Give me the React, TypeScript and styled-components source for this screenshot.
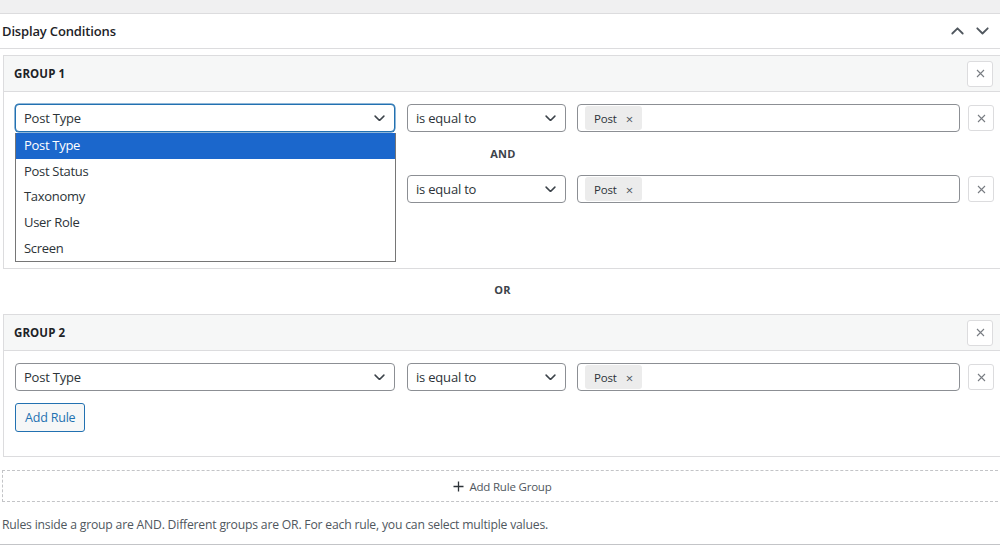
import React from 'react';
import styled, { createGlobalStyle } from 'styled-components';

const GlobalStyle = createGlobalStyle`
  html, body {
    margin: 0;
    padding: 0;
    background: #fff;
    overflow: hidden;
  }
  body {
    font-family: 'Open Sans', 'Noto Sans', sans-serif;
    color: #1d2327;
  }
  * { box-sizing: border-box; }
`;

// Page frame

const TopStrip = styled.div`
  height: 14px;
  background: #f0f0f1;
  border-bottom: 1px solid #dcdcde;
`;

const Panel = styled.div`
  width: 1003px;
  border-bottom: 1px solid #c3c4c7;
`;

const PanelHeader = styled.div`
  display: flex;
  align-items: center;
  justify-content: space-between;
  height: 35px;
  padding: 0 14px 0 2px;
  border-bottom: 1px solid #dcdcde;
`;

const PanelTitle = styled.h2`
  margin: 0;
  font-size: 13px;
  font-weight: 600;
  letter-spacing: -0.15px;
`;

const HeaderArrows = styled.div`
  display: flex;
  gap: 12px;
  color: #50575e;
`;

const PanelBody = styled.div`
  padding: 6px 0 0 2px;
`;

// Groups

const GroupBox = styled.section`
  position: relative;
  margin-left: 1px;
  border: 1px solid #dcdcde;
`;

const GroupHeader = styled.div`
  display: flex;
  align-items: center;
  justify-content: space-between;
  height: 36px;
  padding: 0 9px 0 10px;
  background: #f6f7f7;
  border-bottom: 1px solid #dcdcde;
`;

const GroupTitle = styled.span`
  font-size: 11.5px;
  font-weight: 700;
  letter-spacing: 0.1px;
  margin-top: -1px;
`;

const GroupRules = styled.div<{ $bottom: number }>`
  padding: 12px 0 ${p => p.$bottom}px 11px;
`;

const RuleRow = styled.div`
  display: flex;
  align-items: center;
  height: 28px;
`;

const FieldCell = styled.div`
  position: relative;
  flex: 0 0 380px;
`;

const OperatorCell = styled.div`
  flex: 0 0 159px;
  margin-left: 12px;
`;

const ValueCell = styled.div`
  flex: 0 0 383px;
  margin-left: 11px;
`;

const RemoveCell = styled.div`
  flex: 0 0 26px;
  margin-left: 8px;
`;

const Joiner = styled.div<{ $height: number; $inset?: number; $lift?: number }>`
  display: flex;
  align-items: center;
  justify-content: center;
  height: ${p => p.$height}px;
  padding-bottom: ${p => p.$lift ?? 0}px;
  margin-left: ${p => -(p.$inset ?? 0)}px;
  font-size: 11px;
  font-weight: 700;
  color: #3c434a;
  letter-spacing: 0.3px;
`;

const SelectBox = styled.div<{ $focused?: boolean }>`
  display: flex;
  align-items: center;
  justify-content: space-between;
  height: 28px;
  padding: 0 9px 0 8px;
  border: 1px solid ${p => (p.$focused ? '#2271b1' : '#8c8f94')};
  box-shadow: ${p => (p.$focused ? '0 0 0 0.5px #2271b1' : 'none')};
  border-radius: 4px;
  background: #fff;
  font-size: 13px;
  color: #2c3338;
  letter-spacing: -0.2px;
`;

const ValueBox = styled.div`
  display: flex;
  align-items: stretch;
  height: 28px;
  padding: 1px 0 1px 7px;
  border: 1px solid #8c8f94;
  border-radius: 4px;
  background: #fff;
`;

const Token = styled.span`
  display: flex;
  align-items: center;
  gap: 9px;
  padding: 0 9px;
  background: #ececec;
  border-radius: 3px;
  font-size: 11.5px;
  color: #2c3338;
  letter-spacing: -0.2px;
`;

const TokenX = styled.span`
  font-size: 13px;
  color: #50575e;
  margin-top: 1px;
`;

const RemoveButton = styled.button`
  display: flex;
  align-items: center;
  justify-content: center;
  width: 26px;
  height: 26px;
  padding: 0;
  border: 1px solid #dcdcde;
  border-radius: 3px;
  background: #fff;
  color: #787c82;
`;

const AddRuleButton = styled.button`
  display: block;
  margin-top: 12px;
  height: 29px;
  padding: 0 9px;
  border: 1px solid #2271b1;
  border-radius: 3px;
  background: #f6f7f7;
  color: #2271b1;
  font-family: inherit;
  font-size: 12.5px;
  letter-spacing: -0.2px;
`;

// Open dropdown list

const OptionList = styled.ul`
  position: absolute;
  top: 29px;
  left: 0;
  width: 381px;
  margin: 0;
  padding: 0;
  list-style: none;
  background: #fff;
  border: 1px solid #767676;
  border-top: none;
  z-index: 2;
`;

const OptionItem = styled.li<{ $active?: boolean }>`
  height: 25.7px;
  line-height: 25.7px;
  padding-left: 8px;
  font-size: 13px;
  letter-spacing: -0.3px;
  background: ${p => (p.$active ? '#1b67cc' : '#fff')};
  color: ${p => (p.$active ? '#fff' : '#2c3338')};
`;

// Footer

const AddGroupBox = styled.button`
  display: flex;
  align-items: center;
  justify-content: center;
  gap: 5px;
  width: 100%;
  height: 32px;
  margin-top: 13px;
  border: 1px dashed #c3c4c7;
  background: #fff;
  font-family: inherit;
  font-size: 11.5px;
  color: #50575e;
  letter-spacing: -0.2px;
`;

const HelpText = styled.p`
  margin: 0;
  padding: 14px 0 11px;
  font-size: 12.2px;
  color: #50575e;
  letter-spacing: -0.2px;
`;

// Icons

const Chevron = ({ up = false, size = 10 }: { up?: boolean; size?: number }) => (
  <svg width={size} height={size * 0.6} viewBox="0 0 10 6" fill="none">
    <path
      d={up ? 'M1 5 L5 1 L9 5' : 'M1 1 L5 5 L9 1'}
      stroke="currentColor"
      strokeWidth="1.4"
      strokeLinecap="round"
      strokeLinejoin="round"
    />
  </svg>
);

const Cross = () => (
  <svg width="9" height="9" viewBox="0 0 9 9">
    <path d="M1 1 L8 8 M8 1 L1 8" stroke="currentColor" strokeWidth="1.1" />
  </svg>
);

const Plus = () => (
  <svg width="11" height="11" viewBox="0 0 11 11">
    <path d="M5.5 0.5 V10.5 M0.5 5.5 H10.5" stroke="#2c3338" strokeWidth="1.3" />
  </svg>
);

const SelectChevron = styled.span`
  display: flex;
  color: #3c434a;
`;

// Pieces

const fieldOptions = ['Post Type', 'Post Status', 'Taxonomy', 'User Role', 'Screen'];

const Select: React.FC<{ label: string; focused?: boolean }> = ({ label, focused }) => (
  <SelectBox $focused={focused}>
    <span>{label}</span>
    <SelectChevron><Chevron size={11} /></SelectChevron>
  </SelectBox>
);

const Rule: React.FC<{ open?: boolean; hideField?: boolean }> = ({ open, hideField }) => (
  <RuleRow>
    <FieldCell>
      {!hideField && <Select label="Post Type" focused={open} />}
      {open && (
        <OptionList>
          {fieldOptions.map((o, i) => (
            <OptionItem key={o} $active={i === 0}>{o}</OptionItem>
          ))}
        </OptionList>
      )}
    </FieldCell>
    <OperatorCell>
      <Select label="is equal to" />
    </OperatorCell>
    <ValueCell>
      <ValueBox>
        <Token>Post<TokenX>×</TokenX></Token>
      </ValueBox>
    </ValueCell>
    <RemoveCell>
      <RemoveButton><Cross /></RemoveButton>
    </RemoveCell>
  </RuleRow>
);

const Group: React.FC<{ title: string; bottom: number; children: React.ReactNode }> = ({ title, bottom, children }) => (
  <GroupBox>
    <GroupHeader>
      <GroupTitle>{title}</GroupTitle>
      <RemoveButton><Cross /></RemoveButton>
    </GroupHeader>
    <GroupRules $bottom={bottom}>
      {children}
      <AddRuleButton>Add Rule</AddRuleButton>
    </GroupRules>
  </GroupBox>
);

export default function App() {
  return (
    <>
      <GlobalStyle />
      <TopStrip />
      <Panel>
        <PanelHeader>
          <PanelTitle>Display Conditions</PanelTitle>
          <HeaderArrows>
            <Chevron up size={13} />
            <Chevron size={13} />
          </HeaderArrows>
        </PanelHeader>

        <PanelBody>
          <Group title="GROUP 1" bottom={24}>
            <Rule open />
            <Joiner $height={43} $inset={11}>AND</Joiner>
            <Rule hideField />
          </Group>

          <Joiner $height={45} $lift={4}>OR</Joiner>

          <Group title="GROUP 2" bottom={24}>
            <Rule />
          </Group>

          <AddGroupBox>
            <Plus />
            Add Rule Group
          </AddGroupBox>

          <HelpText>
            Rules inside a group are AND. Different groups are OR. For each rule, you can select multiple values.
          </HelpText>
        </PanelBody>
      </Panel>
    </>
  );
}
